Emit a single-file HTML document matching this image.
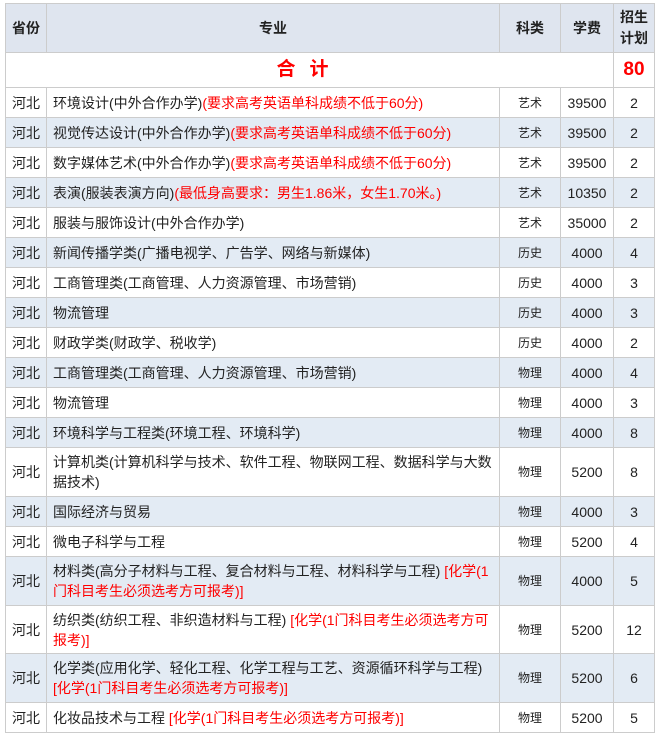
<!DOCTYPE html>
<html><head><meta charset="utf-8"><style>
body{margin:0;background:#fff;font-family:"Liberation Sans","Noto Sans CJK SC",sans-serif;color:#222;font-size:14px}
table{position:absolute;left:5px;top:3px;border-collapse:collapse;table-layout:fixed;width:650px}
td{border:1px solid #ccc;padding:0 6px;line-height:20px}
.h td{background:#dfe5ef;font-weight:bold;text-align:center;padding:0}
.c{text-align:center;padding:0}
.k{text-align:center;padding:0;font-size:12px}
.b td{background:#e3ebf4}
.r{color:#f00}
</style></head><body>
<table>
<colgroup><col style="width:41px"><col style="width:453px"><col style="width:61px"><col style="width:53px"><col style="width:41px"></colgroup>
<tr class="h" style="height:49px"><td>省份</td><td>专业</td><td>科类</td><td>学费</td><td style="line-height:21px">招生<br>计划</td></tr>
<tr style="height:35px"><td colspan="4" style="text-align:center;color:#f00;font-weight:bold;font-size:19px;letter-spacing:14px">合计</td><td class="c" style="color:#f00;font-weight:bold;font-size:19px">80</td></tr>
<tr style="height:30px"><td class="c">河北</td><td>环境设计(中外合作办学)<span class="r">(要求高考英语单科成绩不低于60分)</span></td><td class="k">艺术</td><td class="c">39500</td><td class="c">2</td></tr>
<tr class="b" style="height:30px"><td class="c">河北</td><td>视觉传达设计(中外合作办学)<span class="r">(要求高考英语单科成绩不低于60分)</span></td><td class="k">艺术</td><td class="c">39500</td><td class="c">2</td></tr>
<tr style="height:30px"><td class="c">河北</td><td>数字媒体艺术(中外合作办学)<span class="r">(要求高考英语单科成绩不低于60分)</span></td><td class="k">艺术</td><td class="c">39500</td><td class="c">2</td></tr>
<tr class="b" style="height:30px"><td class="c">河北</td><td>表演(服装表演方向)<span class="r">(最低身高要求：男生1.86米，女生1.70米。)</span></td><td class="k">艺术</td><td class="c">10350</td><td class="c">2</td></tr>
<tr style="height:30px"><td class="c">河北</td><td>服装与服饰设计(中外合作办学)</td><td class="k">艺术</td><td class="c">35000</td><td class="c">2</td></tr>
<tr class="b" style="height:30px"><td class="c">河北</td><td>新闻传播学类(广播电视学、广告学、网络与新媒体)</td><td class="k">历史</td><td class="c">4000</td><td class="c">4</td></tr>
<tr style="height:30px"><td class="c">河北</td><td>工商管理类(工商管理、人力资源管理、市场营销)</td><td class="k">历史</td><td class="c">4000</td><td class="c">3</td></tr>
<tr class="b" style="height:30px"><td class="c">河北</td><td>物流管理</td><td class="k">历史</td><td class="c">4000</td><td class="c">3</td></tr>
<tr style="height:30px"><td class="c">河北</td><td>财政学类(财政学、税收学)</td><td class="k">历史</td><td class="c">4000</td><td class="c">2</td></tr>
<tr class="b" style="height:30px"><td class="c">河北</td><td>工商管理类(工商管理、人力资源管理、市场营销)</td><td class="k">物理</td><td class="c">4000</td><td class="c">4</td></tr>
<tr style="height:30px"><td class="c">河北</td><td>物流管理</td><td class="k">物理</td><td class="c">4000</td><td class="c">3</td></tr>
<tr class="b" style="height:30px"><td class="c">河北</td><td>环境科学与工程类(环境工程、环境科学)</td><td class="k">物理</td><td class="c">4000</td><td class="c">8</td></tr>
<tr style="height:49px"><td class="c">河北</td><td>计算机类(计算机科学与技术、软件工程、物联网工程、数据科学与大数据技术)</td><td class="k">物理</td><td class="c">5200</td><td class="c">8</td></tr>
<tr class="b" style="height:30px"><td class="c">河北</td><td>国际经济与贸易</td><td class="k">物理</td><td class="c">4000</td><td class="c">3</td></tr>
<tr style="height:30px"><td class="c">河北</td><td>微电子科学与工程</td><td class="k">物理</td><td class="c">5200</td><td class="c">4</td></tr>
<tr class="b" style="height:49px"><td class="c">河北</td><td>材料类(高分子材料与工程、复合材料与工程、材料科学与工程) <span class="r">[化学(1门科目考生必须选考方可报考)]</span></td><td class="k">物理</td><td class="c">4000</td><td class="c">5</td></tr>
<tr style="height:48px"><td class="c">河北</td><td>纺织类(纺织工程、非织造材料与工程) <span class="r">[化学(1门科目考生必须选考方可报考)]</span></td><td class="k">物理</td><td class="c">5200</td><td class="c">12</td></tr>
<tr class="b" style="height:49px"><td class="c">河北</td><td>化学类(应用化学、轻化工程、化学工程与工艺、资源循环科学与工程)<br> <span class="r">[化学(1门科目考生必须选考方可报考)]</span></td><td class="k">物理</td><td class="c">5200</td><td class="c">6</td></tr>
<tr style="height:30px"><td class="c">河北</td><td>化妆品技术与工程 <span class="r">[化学(1门科目考生必须选考方可报考)]</span></td><td class="k">物理</td><td class="c">5200</td><td class="c">5</td></tr>
</table>
</body></html>
